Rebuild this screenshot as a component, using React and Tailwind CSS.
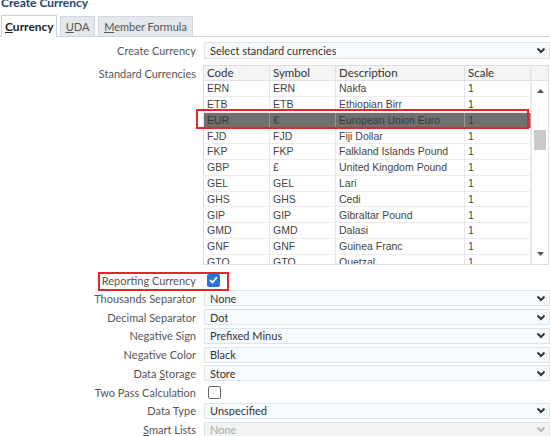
import React from 'react';

const rows = [
  ['ERN', 'ERN', 'Nakfa'],
  ['ETB', 'ETB', 'Ethiopian Birr'],
  ['EUR', '€', 'European Union Euro'],
  ['FJD', 'FJD', 'Fiji Dollar'],
  ['FKP', 'FKP', 'Falkland Islands Pound'],
  ['GBP', '£', 'United Kingdom Pound'],
  ['GEL', 'GEL', 'Lari'],
  ['GHS', 'GHS', 'Cedi'],
  ['GIP', 'GIP', 'Gibraltar Pound'],
  ['GMD', 'GMD', 'Dalasi'],
  ['GNF', 'GNF', 'Guinea Franc'],
  ['GTQ', 'GTQ', 'Quetzal'],
];

const Chevron = ({ muted }) => (
  <svg width="10" height="7" viewBox="0 0 10 7" className="shrink-0">
    <polyline points="1.5,1.5 5,5 8.5,1.5" fill="none" stroke={muted ? '#b5b5b5' : '#333'} strokeWidth="2" />
  </svg>
);

const Select = ({ value, muted, tall }) => (
  <div className={`flex-1 flex items-center border border-[#dde4ea] pl-[5px] pr-[3px] ${tall ? 'h-[17px]' : 'h-[16px]'} ${muted ? 'bg-[#f1f2f3] text-[#a8a8a8]' : 'bg-[#f7fafd] text-[#333]'}`}>
    <span className="truncate">{value}</span>
    <span className="ml-auto"><Chevron muted={muted} /></span>
  </div>
);

const Row = ({ label, children }) => (
  <div className="flex items-center h-[18.75px]">
    <div className="w-[197px] text-right text-[#555] pr-[1px]">{label}</div>
    <div className="flex-1 flex items-center pl-[7px]">{children}</div>
  </div>
);

const Check = ({ checked }) =>
  checked ? (
    <div className="w-[13px] h-[13px] rounded-[2px] bg-[#2c6fe0] flex items-center justify-center ml-[3px]">
      <svg width="9" height="8" viewBox="0 0 9 8">
        <polyline points="1,4.2 3.4,6.5 8,1.2" fill="none" stroke="#fff" strokeWidth="1.8" />
      </svg>
    </div>
  ) : (
    <div className="w-[13px] h-[13px] rounded-[2px] border border-[#666] bg-white ml-[4px]" />
  );

const cols = ['w-[66px]', 'w-[66px]', 'w-[129px]', 'w-[66px]'];

const Table = () => (
  <div className="relative h-[200px] w-[346px] border border-[#dcdcdc] overflow-hidden flex font-['Liberation_Sans',sans-serif] text-[10.5px]">
    <div className="flex-1 flex flex-col">
      <div className="flex h-[15px] bg-[#f4f4f4] border-b border-[#dedede] text-[#333] shrink-0 font-['Lato',sans-serif] text-[11.5px]">
        {['Code', 'Symbol', 'Description', 'Scale'].map((h, i) => (
          <div key={h} className={`${cols[i]} pl-[3px] border-r border-[#e0e0e0] flex items-center`}>{h}</div>
        ))}
      </div>
      {rows.map((r, idx) => {
        const sel = idx === 2;
        return (
          <div key={r[0]} className={`flex h-[15.8px] shrink-0 border-b ${sel ? 'bg-[#6f6f6f] text-[#3a3a3a] border-[#6f6f6f]' : 'bg-white text-[#444] border-[#ececec]'}`}>
            {[r[0], r[1], r[2], '1'].map((c, i) => (
              <div key={i} className={`${cols[i]} pl-[3px] flex items-center border-r ${sel ? 'border-[#9a9a9a]' : 'border-[#e6e6e6]'}`}>{c}</div>
            ))}
          </div>
        );
      })}
    </div>
    <div className="w-[18px] flex flex-col bg-white border-l border-[#ececec]">
      <div className="h-[15px] bg-[#f4f4f4] border-b border-[#dedede]" />
      <div className="flex justify-center pt-[8px]">
        <svg width="7" height="4" viewBox="0 0 7 4"><polygon points="0,4 3.5,0 7,4" fill="#555" /></svg>
      </div>
      <div className="mt-[37px] mx-[2px] h-[20px] bg-[#c9c9c9]" />
      <div className="mt-auto mb-[8px] flex justify-center">
        <svg width="7" height="4" viewBox="0 0 7 4"><polygon points="0,0 3.5,4 7,0" fill="#555" /></svg>
      </div>
    </div>
  </div>
);

export default function App() {
  return (
    <div className="relative w-[550px] h-[436px] overflow-hidden bg-white font-['Lato','Liberation_Sans',sans-serif] text-[11px] leading-none">
      <div className="h-[16px] overflow-hidden">
        <div className="-mt-[3px] font-bold text-[12px] text-[#1d3f6e] pl-[1px]">Create Currency</div>
      </div>
      <div className="flex items-end h-[21px] border-b border-[#c9d3dd] pl-[1px] gap-[3px]">
        <div className="px-[3px] w-[56px] flex items-center bg-white border border-b-0 border-[#c9d3dd] -mb-[1px] h-[22px] font-bold text-[#222] text-[12px]">
          <span><span className="underline">C</span>urrency</span>
        </div>
        <div className="h-[20px] w-[35px] flex items-center justify-center bg-[#e4e8ec] border border-b-0 border-[#cfd6dd] text-[#555]">
          <span><span className="underline">U</span>DA</span>
        </div>
        <div className="h-[20px] w-[95px] flex items-center justify-center bg-[#e4e8ec] border border-b-0 border-[#cfd6dd] text-[#555]">
          <span><span className="underline">M</span>ember Formula</span>
        </div>
      </div>

      <div className="flex items-center mt-[5px] h-[17px]">
        <div className="w-[197px] text-right text-[#555] pr-[1px]">Create Currency</div>
        <div className="flex-1 flex pl-[7px]">
          <Select value="Select standard currencies" tall />
        </div>
      </div>

      <div className="flex mt-[6px]">
        <div className="w-[197px] text-right text-[#555] pr-[1px] pt-[3px]">Standard Currencies</div>
        <div className="pl-[6px]">
          <Table />
        </div>
      </div>

      <div className="mt-[6px]">
        <div className="flex items-center h-[18px]">
          <div className="w-[197px] text-right text-[#555] pr-[1px]">Reporting Currency</div>
          <div className="pl-[7px]"><Check checked /></div>
        </div>
        <Row label="Thousands Separator"><Select value="None" /></Row>
        <Row label="Decimal Separator"><Select value="Dot" /></Row>
        <Row label="Negative Sign"><Select value="Prefixed Minus" /></Row>
        <Row label="Negative Color"><Select value="Black" /></Row>
        <Row label={<span>Data <span className="underline">S</span>torage</span>}><Select value="Store" /></Row>
        <Row label="Two Pass Calculation"><Check /></Row>
        <Row label="Data Type"><Select value="Unspecified" /></Row>
        <Row label={<span><span className="underline">S</span>mart Lists</span>}><Select value="None" muted /></Row>
      </div>

      <div className="absolute left-[196px] top-[109px] w-[333px] h-[20px] border-2 border-[#e3262b]" />
      <div className="absolute left-[98px] top-[272px] w-[131px] h-[19px] border-2 border-[#e3262b]" />
    </div>
  );
}
